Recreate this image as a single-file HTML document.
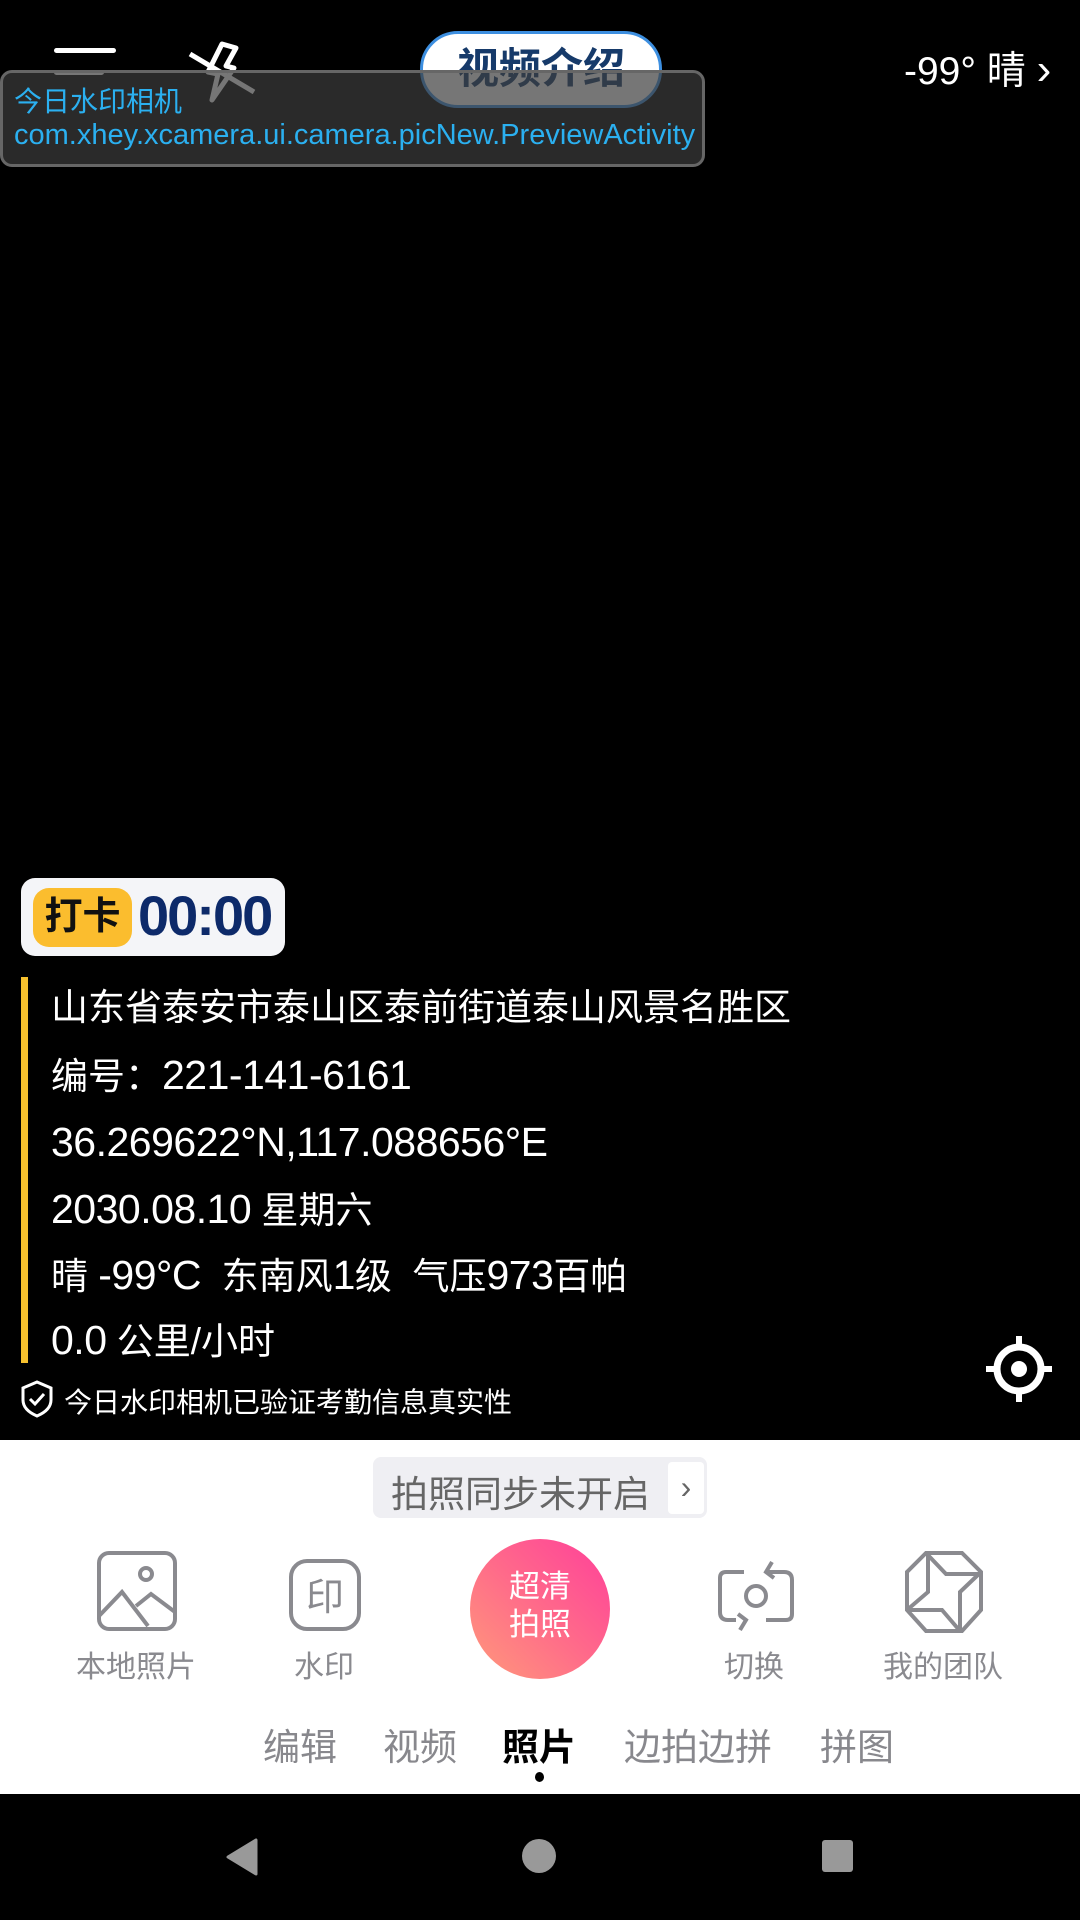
<!DOCTYPE html>
<html><head><meta charset="utf-8"><style>
*{margin:0;padding:0;box-sizing:border-box}
body{width:1080px;height:1920px;background:#000;position:relative;overflow:hidden;font-family:"Liberation Sans","Noto Sans CJK SC",sans-serif}
.a{position:absolute;white-space:nowrap}
.line{position:absolute;left:51px;color:#fff;font-size:37px;line-height:50px}
.line b{font-weight:normal;font-size:41px;letter-spacing:-0.5px}
.lbl{position:absolute;color:#8a8a8f;font-size:30px;transform:translateX(-50%);top:1642px}
.tab{position:absolute;font-size:37px;color:#88888d;transform:translateX(-50%);top:1717px}
</style></head><body>
<div class="a" style="left:54px;top:48px;width:62px;height:5px;background:#fff;border-radius:3px"></div>
<div class="a" style="left:54px;top:70px;width:50px;height:5px;background:#fff;border-radius:3px"></div>
<svg class="a" style="left:184px;top:40px" width="76" height="64" viewBox="0 0 76 64"><path d="M38 4 L52 8 L42 26 L50 28 L28 60 L34 34 L24 32 Z" fill="none" stroke="#fff" stroke-width="5" stroke-linejoin="round"/><path d="M6 14 L70 52" stroke="#fff" stroke-width="5"/></svg>
<div class="a" style="left:420px;top:31px;width:242px;height:77px;background:#fff;border:3px solid #3d8fe0;border-radius:38px;color:#163a6a;font-size:42px;font-weight:bold;text-align:center;line-height:70px">视频介绍</div>
<div class="a" style="left:904px;top:40px;color:#fff;font-size:39px">-99° 晴 <span style="font-size:44px">›</span></div>
<div class="a" style="left:0;top:70px;width:705px;height:97px;background:rgba(60,60,60,0.7);border:3px solid #666;border-radius:12px"></div>
<div class="a" style="left:14px;top:80px;color:#2bb0f0;font-size:28px">今日水印相机</div>
<div class="a" style="left:14px;top:119px;color:#2bb0f0;font-size:29px">com.xhey.xcamera.ui.camera.picNew.PreviewActivity</div>
<div class="a" style="left:21px;top:878px;width:264px;height:78px;background:#f4f5f8;border-radius:14px"></div>
<div class="a" style="left:33px;top:888px;width:99px;height:59px;background:#fbbd2e;border-radius:16px;font-size:38px;font-weight:bold;color:#111;text-align:center;line-height:59px">打卡</div>
<div class="a" style="left:138px;top:883px;font-size:56px;font-weight:bold;color:#0d2a6a;letter-spacing:-2px">00:00</div>
<div class="a" style="left:21px;top:977px;width:7px;height:386px;background:#f7c12e"></div>
<div class="line" style="top:983px">山东省泰安市泰山区泰前街道泰山风景名胜区</div>
<div class="line" style="top:1050px">编号：<b>221-141-6161</b></div>
<div class="line" style="top:1117px"><b>36.269622°N,117.088656°E</b></div>
<div class="line" style="top:1184px"><b>2030.08.10</b> 星期六</div>
<div class="line" style="top:1250px">晴 <b>-99°C</b>&nbsp; 东南风<b>1</b>级&nbsp; 气压<b>973</b>百帕</div>
<div class="line" style="top:1315px"><b>0.0</b> 公里/小时</div>
<svg class="a" style="left:20px;top:1380px" width="34" height="38" viewBox="0 0 34 38"><path d="M17 2 L31 8 V20 C31 28 24 33 17 36 C10 33 3 28 3 20 V8 Z" fill="none" stroke="#fff" stroke-width="3"/><path d="M10 19 L15 24 L24 14" fill="none" stroke="#fff" stroke-width="3"/></svg>
<div class="a" style="left:64px;top:1381px;color:#fff;font-size:28px">今日水印相机已验证考勤信息真实性</div>
<svg class="a" style="left:984px;top:1334px" width="70" height="70" viewBox="0 0 70 70"><circle cx="35" cy="35" r="22" fill="none" stroke="#fff" stroke-width="7"/><circle cx="35" cy="35" r="8" fill="#fff"/><path d="M35 2V13M35 57V68M2 35H13M57 35H68" stroke="#fff" stroke-width="6"/></svg>
<div class="a" style="left:0;top:1440px;width:1080px;height:354px;background:#fff"></div>
<div class="a" style="left:373px;top:1457px;width:334px;height:61px;background:#efeff3;border-radius:8px"></div>
<div class="a" style="left:391px;top:1464px;color:#666;font-size:37px">拍照同步未开启</div>
<div class="a" style="left:668px;top:1462px;width:36px;height:52px;background:#fff;border-radius:4px;color:#666;font-size:32px;text-align:center;line-height:50px">›</div>
<svg class="a" style="left:96px;top:1550px" width="82" height="82" viewBox="0 0 82 82" fill="none" stroke="#8a8a8f" stroke-width="4"><rect x="3" y="3" width="76" height="76" rx="10"/><circle cx="50" cy="24" r="6"/><path d="M3 66 L26 42 L52 76 M40 56 L55 44 L79 62"/></svg>
<svg class="a" style="left:288px;top:1558px" width="74" height="74" viewBox="0 0 74 74" fill="none" stroke="#8a8a8f" stroke-width="4"><rect x="3" y="3" width="68" height="68" rx="16"/><text x="37" y="52" font-size="38" fill="#8a8a8f" stroke="none" text-anchor="middle" font-family="Noto Sans CJK SC">印</text></svg>
<div class="a" style="left:470px;top:1539px;width:140px;height:140px;border-radius:50%;background:linear-gradient(225deg,#ff3f9a,#ff6a8a 50%,#ff9a7a)"></div>
<div class="a" style="left:470px;top:1568px;width:140px;color:#fff;font-size:31px;line-height:38px;text-align:center;white-space:normal">超清<br>拍照</div>
<svg class="a" style="left:716px;top:1560px" width="80" height="80" viewBox="0 0 80 80" fill="none" stroke="#8a8a8f" stroke-width="4"><path d="M28 12 H10 Q4 12 4 18 V52 Q4 60 12 60 H20 M52 12 H68 Q76 12 76 20 V54 Q76 60 70 60 H50"/><circle cx="40" cy="36" r="10"/><path d="M56 2 L50 12 L58 18 M24 70 L30 60 L22 54"/></svg>
<svg class="a" style="left:904px;top:1550px" width="80" height="84" viewBox="0 0 80 84" fill="none" stroke="#8a8a8f" stroke-width="4"><path d="M22 3 H58 L77 22 V60 L58 81 H22 L3 60 V22 Z"/><path d="M22 3 L42 24 H77 M77 22 L56 42 V81 M56 81 L38 60 H3 M3 60 L24 42 V3"/></svg>
<div class="lbl" style="left:136px">本地照片</div>
<div class="lbl" style="left:324px">水印</div>
<div class="lbl" style="left:754px">切换</div>
<div class="lbl" style="left:943px">我的团队</div>
<div class="tab" style="left:300px">编辑</div>
<div class="tab" style="left:420px">视频</div>
<div class="tab" style="left:539px;color:#000;font-weight:bold">照片</div>
<div class="tab" style="left:698px">边拍边拼</div>
<div class="tab" style="left:857px">拼图</div>
<div class="a" style="left:535px;top:1772px;width:9px;height:10px;border-radius:50%;background:#000"></div>
<svg class="a" style="left:224px;top:1838px" width="36" height="38"><path d="M32 2 V36 L4 19 Z" fill="#999" stroke="#999" stroke-width="3" stroke-linejoin="round"/></svg>
<div class="a" style="left:522px;top:1839px;width:34px;height:34px;border-radius:50%;background:#999"></div>
<div class="a" style="left:822px;top:1840px;width:31px;height:32px;border-radius:3px;background:#999"></div>
</body></html>
